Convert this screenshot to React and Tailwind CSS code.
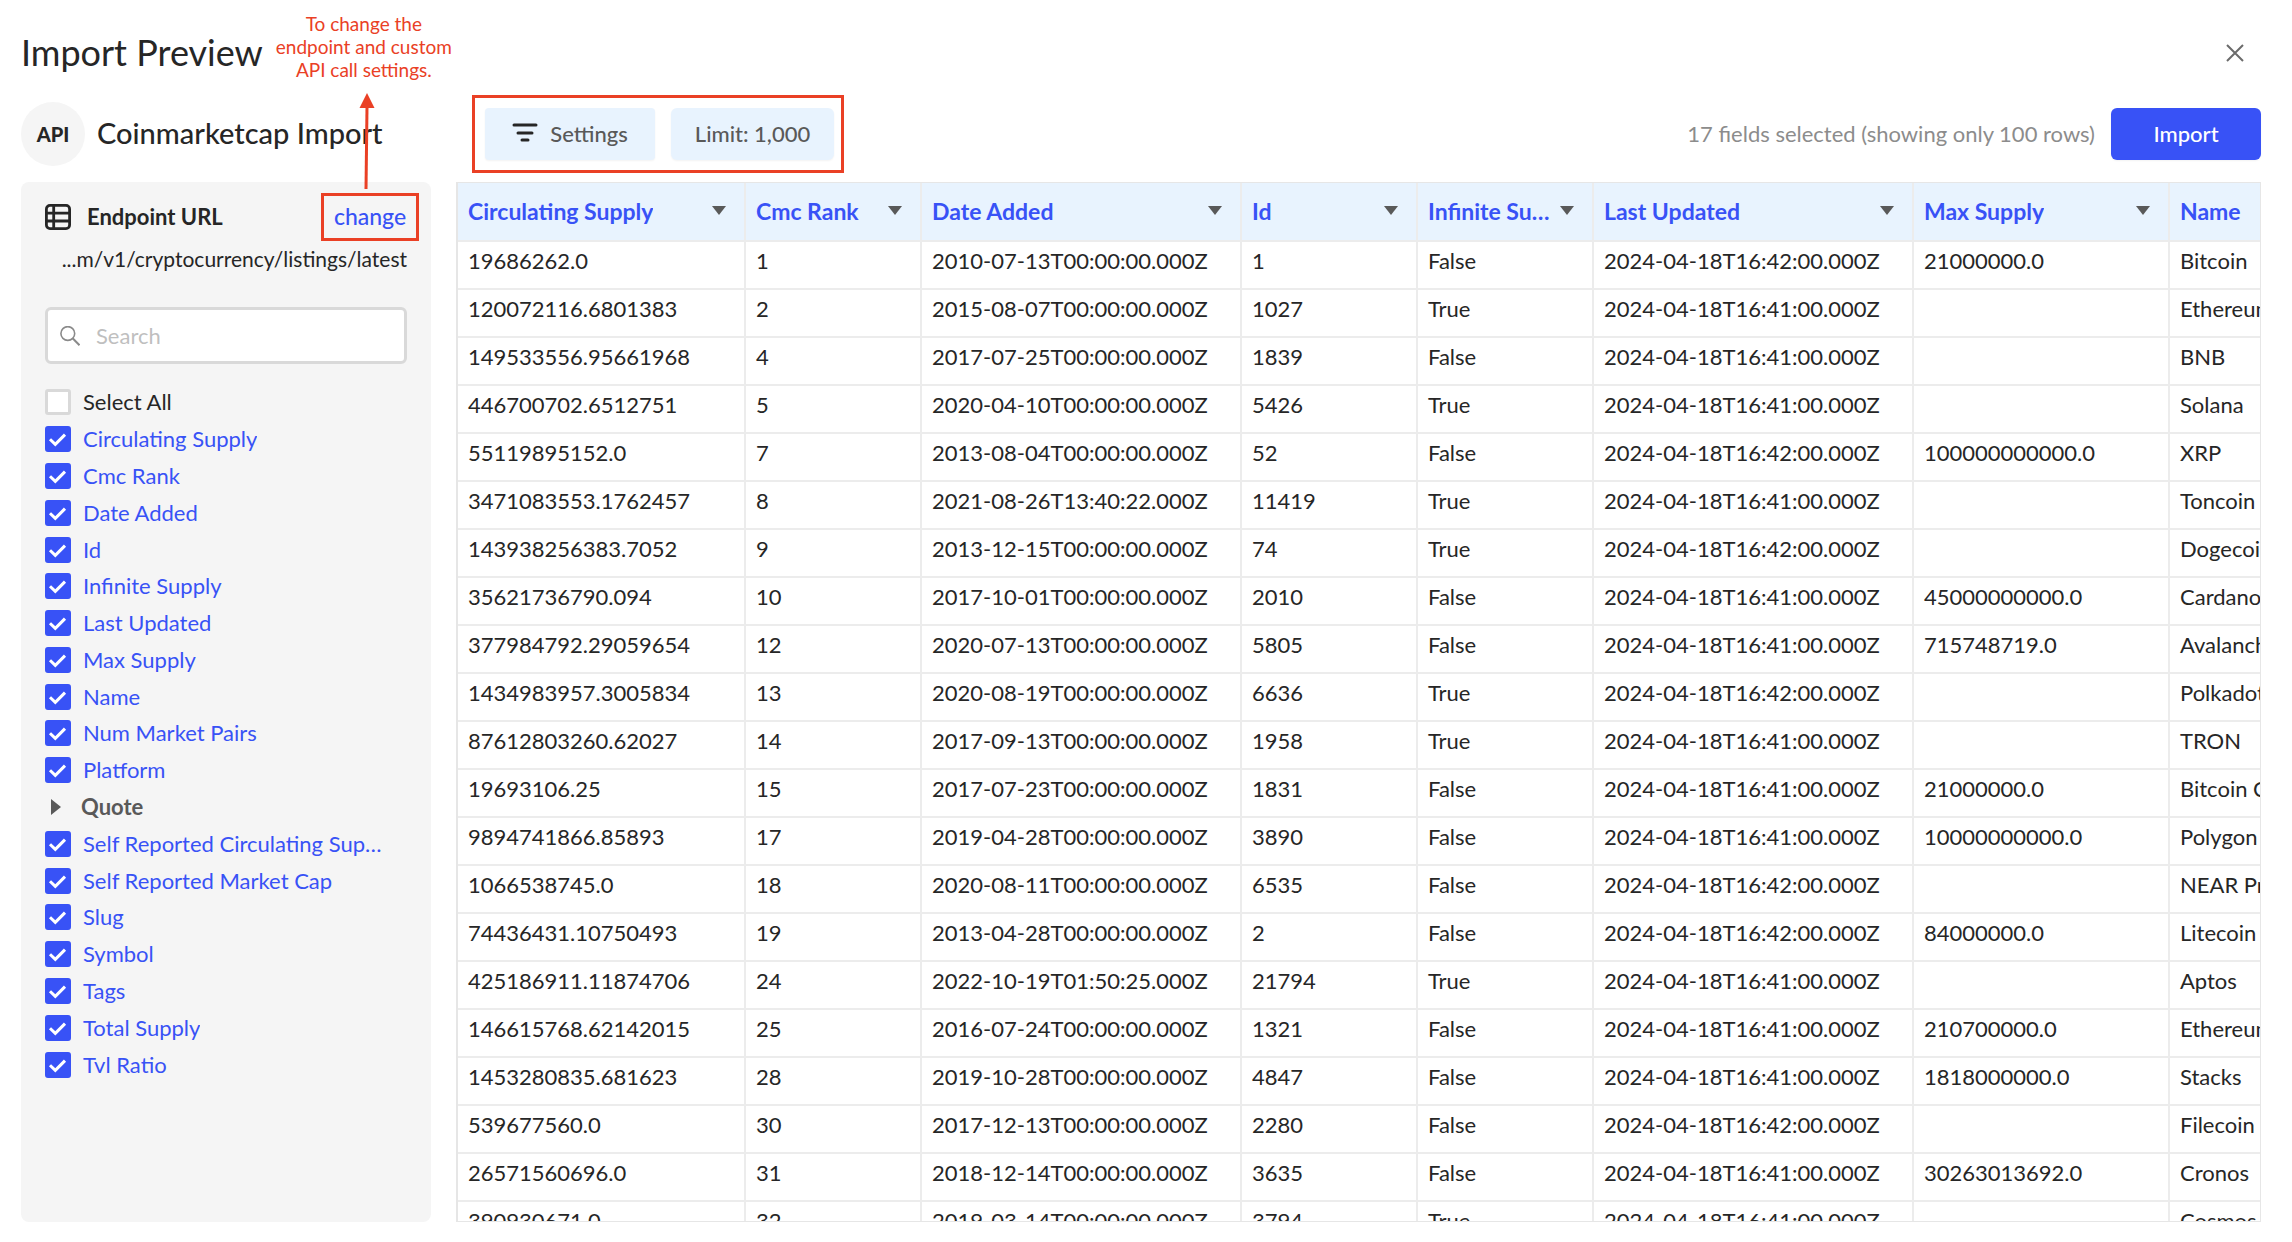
import { useState } from "react";

const FIELDS = [
	"Circulating Supply",
	"Cmc Rank",
	"Date Added",
	"Id",
	"Infinite Supply",
	"Last Updated",
	"Max Supply",
	"Name",
	"Num Market Pairs",
	"Platform",
	"Quote",
	"Self Reported Circulating Supply",
	"Self Reported Market Cap",
	"Slug",
	"Symbol",
	"Tags",
	"Total Supply",
	"Tvl Ratio",
];

const COLUMNS = [
	{ label: "Circulating Supply", width: "w-[288px]" },
	{ label: "Cmc Rank", width: "w-[176px]" },
	{ label: "Date Added", width: "w-[320px]" },
	{ label: "Id", width: "w-[176px]" },
	{ label: "Infinite Supply", width: "w-[176px]" },
	{ label: "Last Updated", width: "w-[320px]" },
	{ label: "Max Supply", width: "w-[256px]" },
	{ label: "Name", width: "w-[256px]" },
];

const D = (date, time = "00:00:00") => `${date}T${time}.000Z`;
const U41 = "2024-04-18T16:41:00.000Z";
const U42 = "2024-04-18T16:42:00.000Z";

const ROWS = [
	["19686262.0", "1", D("2010-07-13"), "1", "False", U42, "21000000.0", "Bitcoin"],
	["120072116.6801383", "2", D("2015-08-07"), "1027", "True", U41, "", "Ethereum"],
	["149533556.95661968", "4", D("2017-07-25"), "1839", "False", U41, "", "BNB"],
	["446700702.6512751", "5", D("2020-04-10"), "5426", "True", U41, "", "Solana"],
	["55119895152.0", "7", D("2013-08-04"), "52", "False", U42, "100000000000.0", "XRP"],
	["3471083553.1762457", "8", D("2021-08-26", "13:40:22"), "11419", "True", U41, "", "Toncoin"],
	["143938256383.7052", "9", D("2013-12-15"), "74", "True", U42, "", "Dogecoin"],
	["35621736790.094", "10", D("2017-10-01"), "2010", "False", U41, "45000000000.0", "Cardano"],
	["377984792.29059654", "12", D("2020-07-13"), "5805", "False", U41, "715748719.0", "Avalanche"],
	["1434983957.3005834", "13", D("2020-08-19"), "6636", "True", U42, "", "Polkadot"],
	["87612803260.62027", "14", D("2017-09-13"), "1958", "True", U41, "", "TRON"],
	["19693106.25", "15", D("2017-07-23"), "1831", "False", U41, "21000000.0", "Bitcoin Cash"],
	["9894741866.85893", "17", D("2019-04-28"), "3890", "False", U41, "10000000000.0", "Polygon"],
	["1066538745.0", "18", D("2020-08-11"), "6535", "False", U42, "", "NEAR Protocol"],
	["74436431.10750493", "19", D("2013-04-28"), "2", "False", U42, "84000000.0", "Litecoin"],
	["425186911.11874706", "24", D("2022-10-19", "01:50:25"), "21794", "True", U41, "", "Aptos"],
	["146615768.62142015", "25", D("2016-07-24"), "1321", "False", U41, "210700000.0", "Ethereum Classic"],
	["1453280835.681623", "28", D("2019-10-28"), "4847", "False", U41, "1818000000.0", "Stacks"],
	["539677560.0", "30", D("2017-12-13"), "2280", "False", U42, "", "Filecoin"],
	["26571560696.0", "31", D("2018-12-14"), "3635", "False", U41, "30263013692.0", "Cronos"],
	["390930671.0", "32", D("2019-03-14"), "3794", "True", U41, "", "Cosmos"],
];

function TableIcon() {
	return (
		<svg viewBox="0 0 26 26" fill="none" stroke="currentColor" strokeWidth="2.8" aria-hidden="true" className="h-[26px] w-[26px] shrink-0">
			<rect x="1.4" y="1.4" width="23.2" height="23.2" rx="3.6" />
			<path d="M8.7 1.2v23.6M1.2 9.2h23.6M1.2 17h23.6" />
		</svg>
	);
}

function FilterIcon() {
	return (
		<svg viewBox="0 0 26 20" fill="none" stroke="#262626" strokeWidth="3" strokeLinecap="round" aria-hidden="true" className="h-5 w-[26px] shrink-0">
			<path d="M2 2h22M6 10h14M10 17h6" />
		</svg>
	);
}

function SearchIcon() {
	return (
		<svg viewBox="0 0 20 20" fill="none" stroke="#8a8a8a" strokeWidth="1.6" aria-hidden="true" className="h-5 w-5 shrink-0">
			<circle cx="7.8" cy="7.5" r="6.9" />
			<path d="M12.6 12.3l6.9 6.9" strokeWidth="2" />
		</svg>
	);
}

function Checkbox({ id, checked, onChange }) {
	return (
		<span className="grid shrink-0">
			<input
				id={id}
				type="checkbox"
				checked={checked}
				onChange={onChange}
				className="col-start-1 row-start-1 h-[26px] w-[26px] appearance-none rounded-[3px] border-3 border-[#d9d9d9] bg-white checked:border-[#3852f6] checked:bg-[#3852f6]"
			/>
			{checked && (
				<svg viewBox="0 0 26 26" fill="none" stroke="white" strokeWidth="3" aria-hidden="true" className="pointer-events-none col-start-1 row-start-1 h-[26px] w-[26px]">
					<path d="M5 13.2l5.3 5.2L20 8.6" />
				</svg>
			)}
		</span>
	);
}

function FieldItem({ label, checked, onChange, labelClass = "text-[#3852f6]" }) {
	const id = `field-${label.toLowerCase().replaceAll(" ", "-")}`;
	return (
		<li className="flex min-w-0 items-center gap-3">
			<Checkbox id={id} checked={checked} onChange={onChange} />
			<label htmlFor={id} className={`truncate ${labelClass}`}>
				{label}
			</label>
		</li>
	);
}

function Sidebar() {
	const [unchecked, setUnchecked] = useState({});
	const [selectAll, setSelectAll] = useState(false);
	const [query, setQuery] = useState("");

	const visible = FIELDS.filter((field) => field.toLowerCase().includes(query.toLowerCase()));

	return (
		<aside className="w-[410px] shrink-0 rounded-lg bg-[#f5f5f5] px-6 pt-[11px] text-[22px] leading-7">
			<div className="flex items-center">
				<TableIcon />
				<h3 className="ml-4 font-bold">Endpoint URL</h3>
				<div className="relative -mr-3 ml-auto">
					<button type="button" className="block h-12 w-[98px] border-3 border-[#ea4025] pb-0.5 text-[23px] font-medium text-[#3852f6]">
						change
					</button>
					<svg viewBox="0 0 16 96" aria-hidden="true" className="absolute bottom-[52px] left-[38px] h-24 w-4">
						<path d="M8 14L7 96" stroke="#ea4025" strokeWidth="3" />
						<path d="M8 0l7.500 15h-15z" fill="#ea4025" />
					</svg>
				</div>
			</div>
			<p className="mt-1 text-right text-[21px]">...m/v1/cryptocurrency/listings/latest</p>

			<div className="mt-[34px] flex h-[57px] items-center gap-4 rounded-md border-3 border-[#d9d9d9] bg-white px-3">
				<SearchIcon />
				<input
					type="text"
					aria-label="Search fields"
					placeholder="Search"
					value={query}
					onChange={(event) => setQuery(event.target.value)}
					className="min-w-0 flex-1 bg-transparent outline-none placeholder:text-[#bfbfbf]"
				/>
			</div>

			<ul className="mt-5 grid h-[699px] auto-rows-fr grid-cols-1 pr-4">
				<FieldItem label="Select All" checked={selectAll} onChange={() => setSelectAll(!selectAll)} labelClass="text-[#262626]" />
				{visible.map((field) =>
					field === "Quote" ? (
						<li key={field} className="flex items-center">
							<button type="button" className="flex items-center gap-5 pl-[6px] font-bold text-[#595959]">
								<svg viewBox="0 0 10 16" fill="currentColor" aria-hidden="true" className="h-4 w-[10px]">
									<path d="M0 0l10 8-10 8z" />
								</svg>
								{field}
							</button>
						</li>
					) : (
						<FieldItem key={field} label={field} checked={!unchecked[field]} onChange={() => setUnchecked({ ...unchecked, [field]: !unchecked[field] })} />
					)
				)}
			</ul>
		</aside>
	);
}

function PreviewTable() {
	return (
		<div className="min-w-0 flex-1 overflow-hidden border border-l-2 border-[#e6e6e6]">
			<table className="w-[1968px] table-fixed border-separate border-spacing-0 text-left text-[22px] leading-7">
				<thead>
					<tr>
						{COLUMNS.map((column) => (
							<th key={column.label} scope="col" className={`${column.width} h-[59px] border-r-2 border-b-2 border-[#ececec] bg-[#e8f3fe] pr-[18px] pb-0.5 pl-[10px] text-[23px] font-bold text-[#3852f6]`}>
								<div className="flex items-center justify-between gap-2">
									<span className="truncate">{column.label}</span>
									<svg viewBox="0 0 14 9" fill="#595959" aria-hidden="true" className="h-[9px] w-[14px] shrink-0">
										<path d="M0 0h14L7 9z" />
									</svg>
								</div>
							</th>
						))}
					</tr>
				</thead>
				<tbody>
					{ROWS.map((row) => (
						<tr key={row[1]}>
							{row.map((value, index) => (
								<td key={COLUMNS[index].label} className="h-12 border-r-2 border-b-2 border-[#ececec] pb-2 pl-[10px] whitespace-nowrap">
									{value}
								</td>
							))}
						</tr>
					))}
				</tbody>
			</table>
		</div>
	);
}

export default function App() {
	return (
		<main className="flex h-screen min-h-[1100px] flex-col overflow-hidden bg-white pr-[31px] pb-5 pl-[21px] font-['Lato',sans-serif] text-[#262626]">
			<header className="flex h-[95px] shrink-0 items-start">
				<h1 className="mt-[30px] text-4xl leading-11">Import Preview</h1>
				<p className="mt-3 ml-3 w-[178px] text-center text-[19px] leading-[23px] whitespace-nowrap text-[#ea4025]">
					To change the
					<br />
					endpoint and custom
					<br />
					API call settings.
				</p>
				<button type="button" aria-label="Close" className="mt-11 mr-[17px] ml-auto">
					<svg viewBox="0 0 18 18" fill="none" stroke="#6b6b6b" strokeWidth="2" aria-hidden="true" className="h-[18px] w-[18px]">
						<path d="M1 1l16 16M17 1L1 17" />
					</svg>
				</button>
			</header>

			<div className="flex shrink-0 items-center">
				<div className="flex w-[451px] items-center gap-3">
					<div className="flex h-16 w-16 shrink-0 items-center justify-center rounded-full bg-[#f5f5f5] text-xl font-black">API</div>
					<h2 className="pb-0.5 text-[29px] leading-9 font-medium whitespace-nowrap">Coinmarketcap Import</h2>
				</div>
				<div className="flex gap-4 border-3 border-[#ea4025] py-[10px] pr-[7px] pl-[10px] text-[22px] font-medium text-[#595959]">
					<button type="button" className="flex h-[52px] w-[170px] items-center justify-center gap-3 rounded bg-[#e8f3fe] pb-0.5 shadow-xs">
						<FilterIcon />
						Settings
					</button>
					<button type="button" className="h-[52px] w-[163px] rounded-md bg-[#e8f3fe] pb-0.5 shadow-xs">
						Limit: 1,000
					</button>
				</div>
				<p className="mr-4 ml-auto pb-0.5 text-[22px] text-[#8c8c8c]">17 fields selected (showing only 100 rows)</p>
				<button type="button" className="h-[52px] w-[150px] rounded-md bg-[#3852f6] pb-0.5 text-[22px] font-medium text-white shadow-xs">
					Import
				</button>
			</div>

			<div className="mt-[9px] flex min-h-0 flex-1 gap-[25px]">
				<Sidebar />
				<PreviewTable />
			</div>
		</main>
	);
}
